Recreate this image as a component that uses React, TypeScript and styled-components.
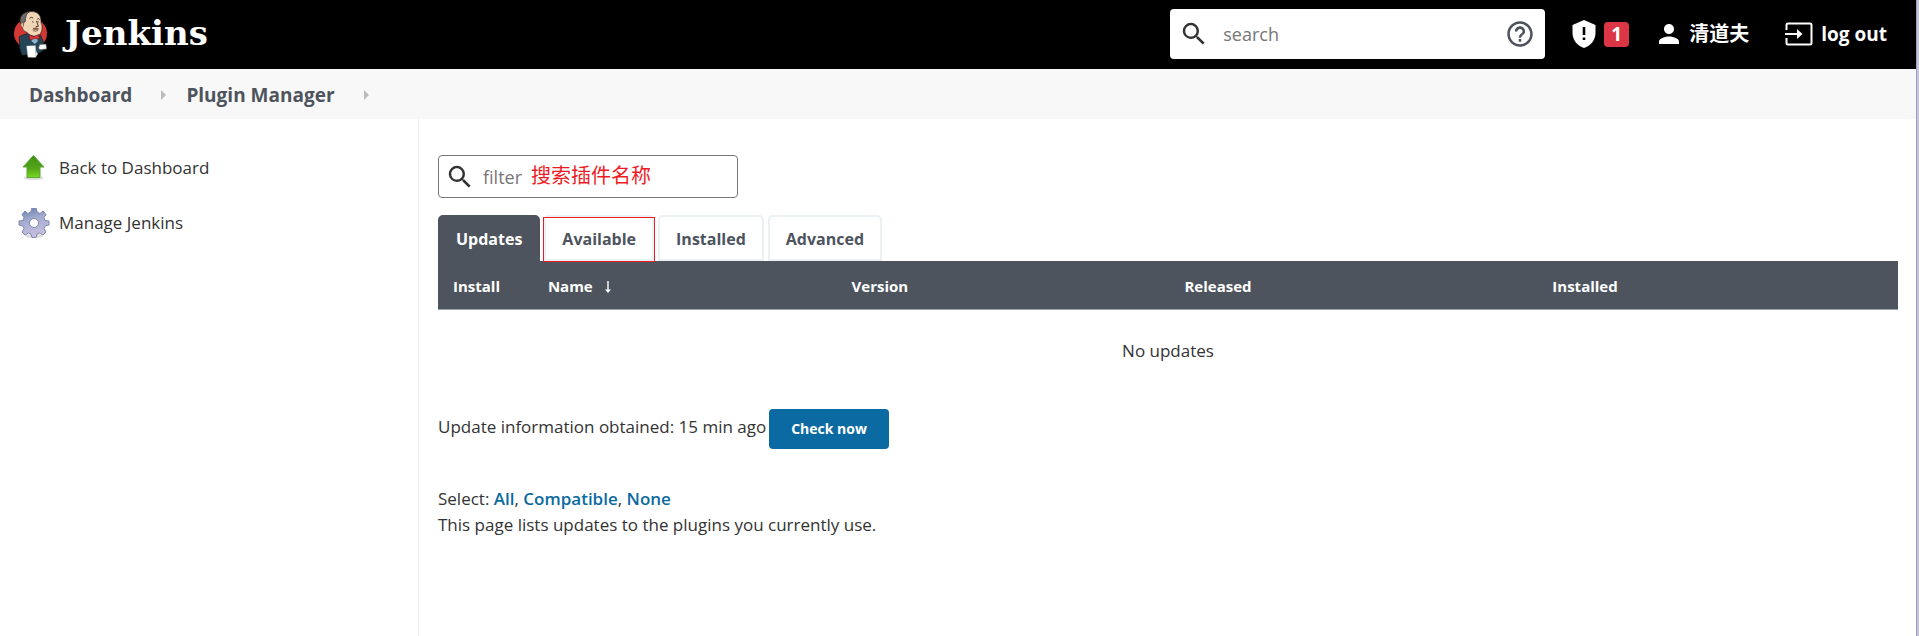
import React from 'react';
import styled, { createGlobalStyle } from 'styled-components';

const GlobalStyle = createGlobalStyle`
  *, *::before, *::after { box-sizing: border-box; }
  body {
    margin: 0;
    background: #fff;
    color: #333;
    font: 400 17px/26px "Open Sans", "Noto Sans CJK SC", sans-serif;
  }
  a { color: inherit; text-decoration: none; }
`;

const Frame = styled.div`
  min-height: 100vh;
  display: flex;
  padding-right: 2px;
  background: #c8c8cc;
`;

const Page = styled.div`
  flex: 1;
  min-width: 0;
  display: flex;
  flex-direction: column;
  background: #fff;
  border-right: 1px solid #9999dd;
`;

const Header = styled.header`
  display: flex;
  align-items: center;
  height: 69px;
  padding: 0 29px 1px 14px;
  background: #000;
  color: #fff;
  font-size: 19px;
  font-weight: 700;
`;

const Brand = styled.a`
  display: flex;
  align-items: center;
  gap: 18px;
  margin-right: auto;
  font-family: "DejaVu Serif", serif;
  font-size: 34px;
`;

const BrandName = styled.span`
  padding-bottom: 3px;
`;

const SearchBox = styled.label`
  display: flex;
  align-items: center;
  width: 375px;
  height: 50px;
  margin-right: 27px;
  padding: 0 11px 0 9px;
  border-radius: 4px;
  background: #fff;
  color: #333;
`;

const FilterBox = styled.label`
  position: relative;
  display: flex;
  align-items: center;
  width: 300px;
  height: 43px;
  padding: 0 6px;
  border: 1px solid #777;
  border-radius: 4px;
`;

const TextInput = styled.input<{ $gap: number }>`
  flex: 1;
  min-width: 0;
  margin-left: ${p => p.$gap}px;
  padding: 0;
  border: 0;
  outline: 0;
  background: transparent;
  color: #333;
  font: inherit;
  font-size: 18px;
  font-weight: 400;
  &::placeholder { color: #767676; opacity: 1; }
`;

const HelpLink = styled.a`
  display: flex;
  color: #4d545d;
`;

const HeaderLink = styled.a<{ $gap: number; $after?: number }>`
  display: flex;
  align-items: center;
  gap: ${p => p.$gap}px;
  margin-right: ${p => p.$after || 0}px;
  white-space: nowrap;
`;

const UserName = styled.span`
  font-size: 20px;
`;

const Badge = styled.span`
  width: 25px;
  height: 25px;
  border-radius: 4px;
  background: #dc3545;
  font-size: 19px;
  line-height: 25px;
  text-align: center;
`;

const Breadcrumbs = styled.nav`
  display: flex;
  align-items: center;
  height: 50px;
  padding: 2px 0 0 29px;
  background: #f8f8f8;
  color: #4d545d;
  font-size: 19px;
  font-weight: 700;
`;

const Crumb = styled.a`
  display: flex;
  align-items: center;
  margin-right: 20px;
  &::after {
    content: "";
    margin-left: 29px;
    border: 5px solid transparent;
    border-left-color: #bbb;
    border-right-width: 0;
  }
`;

const Body = styled.div`
  flex: 1;
  display: flex;
`;

const Sidebar = styled.nav`
  flex: 0 0 419px;
  padding: 21px 18px;
  border-right: 1px solid #e6f0f0;
`;

const Task = styled.a`
  display: flex;
  align-items: center;
  gap: 9px;
  height: 55px;
`;

const Main = styled.main`
  flex: 1;
  min-width: 0;
  padding: 36px 18px 36px 19px;
`;

const Annotation = styled.span`
  position: absolute;
  left: 92px;
  top: 6px;
  color: #ed1c24;
  font-size: 20px;
  line-height: 26px;
  font-family: KaiTi, "Noto Sans CJK SC", sans-serif;
  pointer-events: none;
`;

const Tabs = styled.nav`
  display: flex;
  gap: 4px;
  margin-top: 17px;
`;

const Tab = styled.a<{ $active?: boolean }>`
  position: relative;
  height: 46px;
  padding: 0 16px;
  border: 2px solid ${p => (p.$active ? '#4d545d' : '#ebf0f2')};
  border-radius: 5px 5px 0 0;
  background: ${p => (p.$active ? '#4d545d' : '#fff')};
  color: ${p => (p.$active ? '#fff' : '#4d545d')};
  font-size: 16px;
  font-weight: 700;
  line-height: 44px;
`;

const Highlight = styled.span`
  position: absolute;
  inset: 0 -3px -3px;
  border: 1px solid #ed1c24;
  pointer-events: none;
`;

const Table = styled.table`
  width: 100%;
  table-layout: fixed;
  border-collapse: separate;
  border-spacing: 0;
`;

const HeadCell = styled.th<{ $width: string }>`
  width: ${p => p.$width};
  height: 49px;
  padding: 2px 15px 0;
  border-bottom: 1px solid #98a1aa;
  background: #4d545d;
  color: #fff;
  font-size: 15px;
  font-weight: 700;
  text-align: left;
  svg { margin-left: 7px; vertical-align: -2px; }
`;

const EmptyCell = styled.td`
  height: 82px;
  padding: 0;
  text-align: center;
`;

const CheckRow = styled.div`
  display: flex;
  align-items: center;
  gap: 3px;
  margin: 17px 0 37px;
`;

const CheckText = styled.span`
  padding-bottom: 4px;
`;

const CheckButton = styled.button`
  height: 40px;
  padding: 0 22px;
  border: 0;
  border-radius: 4px;
  background: #0b6aa2;
  color: #fff;
  font: inherit;
  font-size: 14px;
  font-weight: 700;
`;

const SelectLink = styled.a`
  color: #0b6aa2;
  font-weight: 600;
`;

const Butler = () => (
  <svg width="33" height="49" viewBox="44 28 100 146" aria-hidden="true">
    <ellipse cx="94" cy="98" rx="50" ry="47" fill="#d33833" />
    <path d="M60 107 L82 99 L124 102 L134 126 L131 152 L112 160 L68 164 L61 142 Z" fill="#254456" stroke="#0d1a22" strokeWidth="2" />
    <path d="M94 108 L114 108 L116 122 L107 130 L98 122 Z" fill="#8fb3cb" />
    <path d="M64 60 C64 36 88 28 108 33 C124 38 126 52 126 66 C132 78 129 98 118 104 C106 109 90 104 83 94 C74 92 66 82 64 60 Z" fill="#f0d6b7" stroke="#33261c" strokeWidth="2" />
    <path d="M64 66 C58 46 72 34 91 32 C79 40 80 48 78 62 L74 64 L72 76 Z" fill="#6e6a6b" stroke="#241f1e" strokeWidth="2" />
    <path d="M72 66 C64 62 61 77 72 80" fill="#e6c49d" stroke="#6b4f3a" strokeWidth="2" />
    <path d="M91 52 Q96 46 102 51 M114 55 Q118 50 122 56 M99 62 L103 64 M115 62 L119 63 M112 60 L118 76 L110 77" fill="none" stroke="#4a382b" strokeWidth="3" />
    <path d="M99 84 Q110 76 121 84 Q110 91 99 84 Z" fill="#8b5e48" />
    <path d="M101 89 Q109 94 117 88" fill="none" stroke="#5a2f28" strokeWidth="2" />
    <path d="M89 102 L104 108 L119 101 L121 115 L107 113 L92 118 Z" fill="#e0353b" stroke="#6d1518" strokeWidth="2" />
    <path d="M122 131 L141 130 L143 145 L123 147 L118 142 Z" fill="#fff" stroke="#555" strokeWidth="2" />
    <path d="M82 136 L109 134 L111 152 L116 160 L109 171 L86 170 Z" fill="#fff" stroke="#999" strokeWidth="1" />
    <path d="M109 138 L110 168" stroke="#aaa" strokeWidth="2" />
  </svg>
);

const SearchIcon = () => (
  <svg width="30" height="30" viewBox="0 0 24 24" fill="#333" aria-hidden="true">
    <path d="M15.5 14h-.79l-.28-.27A6.47 6.47 0 0 0 16 9.5 6.5 6.5 0 1 0 9.5 16c1.61 0 3.09-.59 4.23-1.57l.27.28v.79l5 4.99L20.49 19l-4.99-5zm-6 0C7.01 14 5 11.99 5 9.5S7.01 5 9.5 5 14 7.01 14 9.5 11.99 14 9.5 14z" />
  </svg>
);

const HelpIcon = () => (
  <svg width="28" height="28" viewBox="1 1 22 22" fill="currentColor" aria-hidden="true">
    <path d="M11 18h2v-2h-2v2zm1-16C6.48 2 2 6.48 2 12s4.48 10 10 10 10-4.48 10-10S17.52 2 12 2zm0 18c-4.41 0-8-3.59-8-8s3.59-8 8-8 8 3.59 8 8-3.59 8-8 8zm0-14c-2.21 0-4 1.79-4 4h2c0-1.1.9-2 2-2s2 .9 2 2c0 2-3 1.75-3 5h2c0-2.25 3-2.5 3-5 0-2.21-1.79-4-4-4z" />
  </svg>
);

const ShieldIcon = () => (
  <svg width="24" height="28" viewBox="0 0 24 28" aria-hidden="true">
    <path d="M12 0 L23.500 5 V13 C23.500 20 18.500 26 12 28 C5.500 26 0.500 20 0.500 13 V5 Z" fill="#fff" />
    <path d="M10.700 7 h2.600 v8 h-2.600z M10.700 17.500 h2.600 v2.600 h-2.600z" fill="#000" />
  </svg>
);

const PersonIcon = () => (
  <svg width="20" height="20" viewBox="4 4 16 16" fill="#fff" aria-hidden="true">
    <path d="M12 12c2.210 0 4-1.790 4-4s-1.790-4-4-4-4 1.790-4 4 1.790 4 4 4zm0 2c-2.670 0-8 1.340-8 4v2h16v-2c0-2.660-5.330-4-8-4z" />
  </svg>
);

const LogoutIcon = () => (
  <svg width="28" height="24" viewBox="0 0 28 24" fill="none" stroke="#fff" strokeWidth="2" aria-hidden="true">
    <path d="M1.500 8 V3 Q1.500 1.500 3 1.500 H25 Q26.500 1.500 26.500 3 V21 Q26.500 22.500 25 22.500 H3 Q1.500 22.500 1.500 21 V16" />
    <path d="M0 12 H14" />
    <path d="M12 7 L17.500 12 L12 17 Z" fill="#fff" stroke="none" />
  </svg>
);

const UpIcon = () => (
  <svg width="32" height="30" viewBox="0 0 32 30" aria-hidden="true">
    <defs>
      <linearGradient id="up" x1="0" y1="0" x2="0" y2="1">
        <stop offset="0" stopColor="#3f8f16" />
        <stop offset="0.6" stopColor="#55a617" />
        <stop offset="1" stopColor="#76da1c" />
      </linearGradient>
    </defs>
    <ellipse cx="15.500" cy="25" rx="10" ry="2" fill="#ddd" />
    <path d="M15.500 2.500 L26 14 H22 V24.500 H9 V14 H5 Z" fill="url(#up)" stroke="#5aa637" strokeWidth="1" strokeLinejoin="round" />
  </svg>
);

const GearIcon = () => (
  <svg width="32" height="32" viewBox="0 0 32 32" aria-hidden="true">
    <defs>
      <linearGradient id="gear" x1="0" y1="0" x2="0.300" y2="1">
        <stop offset="0" stopColor="#5f7cac" />
        <stop offset="0.450" stopColor="#a3abcf" />
        <stop offset="1" stopColor="#c6bfdf" />
      </linearGradient>
    </defs>
    <ellipse cx="16" cy="29" rx="9" ry="2" fill="#ddd" />
    <path
      fill="url(#gear)"
      stroke="#8188ad"
      strokeWidth="1"
      strokeLinejoin="round"
      fillRule="evenodd"
      d="M13.500 1.500 H18.500 L19 5 L22 6.500 L25 4 L28 7.500 L26 10.500 L27 13.500 L31 14 V18 L27 19 L26 21.500 L28 25 L25 28 L21.500 26 L19 27 L18 30.500 H14 L13 27 L10.500 26 L7 28 L4 25 L6 21.500 L5 19 L1 18 V14 L5 13.500 L6 10.500 L4 7.500 L7 4 L10 6.500 L13 5 Z M16 11.500 A4.500 4.500 0 1 0 16 20.500 A4.500 4.500 0 1 0 16 11.500 Z"
    />
  </svg>
);

const SortArrow = () => (
  <svg width="8" height="14" viewBox="0 0 8 14" fill="none" stroke="#fff" aria-hidden="true">
    <path d="M4 1 V12" strokeWidth="1.400" />
    <path d="M1 9.500 H7 L4 13 Z" fill="#fff" stroke="none" />
  </svg>
);

export default function App() {
  return (
    <Frame>
      <GlobalStyle />
      <Page>
        <Header>
          <Brand href="#">
            <Butler />
            <BrandName>Jenkins</BrandName>
          </Brand>
          <SearchBox>
            <SearchIcon />
            <TextInput $gap={14} type="text" placeholder="search" aria-label="search" />
            <HelpLink href="#help" aria-label="Help">
              <HelpIcon />
            </HelpLink>
          </SearchBox>
          <HeaderLink href="#security" $gap={8} $after={30}>
            <ShieldIcon />
            <Badge>1</Badge>
          </HeaderLink>
          <HeaderLink href="#user" $gap={10} $after={36}>
            <PersonIcon />
            <UserName>清道夫</UserName>
          </HeaderLink>
          <HeaderLink href="#logout" $gap={8}>
            <LogoutIcon />
            log out
          </HeaderLink>
        </Header>
        <Breadcrumbs>
          <Crumb href="#dashboard">Dashboard</Crumb>
          <Crumb href="#plugins">Plugin Manager</Crumb>
        </Breadcrumbs>
        <Body>
          <Sidebar>
            <Task href="#dashboard">
              <UpIcon />
              Back to Dashboard
            </Task>
            <Task href="#manage">
              <GearIcon />
              Manage Jenkins
            </Task>
          </Sidebar>
          <Main>
            <FilterBox>
              <SearchIcon />
              <TextInput $gap={8} type="text" placeholder="filter" aria-label="filter" />
              <Annotation>搜索插件名称</Annotation>
            </FilterBox>
            <Tabs>
              <Tab href="#updates" $active>Updates</Tab>
              <Tab href="#available">
                Available
                <Highlight />
              </Tab>
              <Tab href="#installed">Installed</Tab>
              <Tab href="#advanced">Advanced</Tab>
            </Tabs>
            <Table>
              <thead>
                <tr>
                  <HeadCell $width="6.5%">Install</HeadCell>
                  <HeadCell $width="20.8%">
                    Name <SortArrow />
                  </HeadCell>
                  <HeadCell $width="22.8%">Version</HeadCell>
                  <HeadCell $width="25.2%">Released</HeadCell>
                  <HeadCell $width="24.7%">Installed</HeadCell>
                </tr>
              </thead>
              <tbody>
                <tr>
                  <EmptyCell colSpan={5}>No updates</EmptyCell>
                </tr>
              </tbody>
            </Table>
            <CheckRow>
              <CheckText>Update information obtained: 15 min ago</CheckText>
              <CheckButton type="button">Check now</CheckButton>
            </CheckRow>
            <div>
              Select: <SelectLink href="#all">All</SelectLink>, <SelectLink href="#compatible">Compatible</SelectLink>,{' '}
              <SelectLink href="#none">None</SelectLink>
            </div>
            <div>This page lists updates to the plugins you currently use.</div>
          </Main>
        </Body>
      </Page>
    </Frame>
  );
}
